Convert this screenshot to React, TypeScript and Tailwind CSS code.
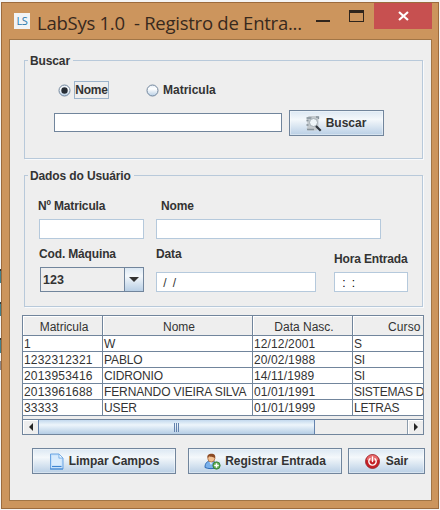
import type { ReactNode } from "react";

const raised =
  "flex items-center justify-center border border-[#71859c] bg-linear-to-b from-[#dce8f3] via-[#f4f8fb] via-35% to-[#b9cfe5] shadow-[inset_0_0_0_1px_#ffffff66]";
const field = "border border-[#b5c9dc] bg-white";

function Group({ title, className, children }: { title: string; className: string; children: ReactNode }) {
  return (
    <section className={`relative ml-[14px] w-[399px] border border-[#b8c9da] shadow-[1px_1px_0_#f8fafc] ${className}`}>
      <h2 className="absolute -top-[8px] left-[3px] bg-[#eeeeee] pl-[2px] pr-[3px] font-bold leading-[16px] tracking-[-0.12px]">{title}</h2>
      {children}
    </section>
  );
}

function Radio({ checked }: { checked?: boolean }) {
  return (
    <svg className="h-[13px] w-[13px] shrink-0" viewBox="0 0 13 13">
      <defs>
        <linearGradient id="radioFill" x1="0" y1="0" x2="0" y2="1">
          <stop offset="0" stopColor="#e4edf6" />
          <stop offset=".35" stopColor="#ffffff" />
          <stop offset="1" stopColor="#b6cee5" />
        </linearGradient>
      </defs>
      <circle cx="6.5" cy="6.5" r="5.5" fill="url(#radioFill)" stroke="#71859c" />
      {checked && <circle cx="6.5" cy="6.5" r="3.2" fill="#272d35" />}
    </svg>
  );
}

function SearchIcon() {
  return (
    <svg className="h-[17px] w-[17px]" viewBox="0 0 17 17">
      <path d="M2 2.500 4 1h8l1.500 1v11l-2 2.500H3L1.500 14l1-2-1-2 1-2-1-2z" fill="#c3c9cd" />
      <path d="M1.500 3h5M1.500 5.500h2M1.500 10h2M2 14.500h7M11 2h2.500v2" stroke="#87939b" strokeWidth="1.300" fill="none" />
      <circle cx="8.500" cy="7.500" r="4" fill="#eef5f8" stroke="#a3adb3" strokeWidth="1" />
      <path d="m11 11 4.700 4.700" stroke="#2f363c" strokeWidth="2.200" />
    </svg>
  );
}

function PageIcon() {
  return (
    <svg className="h-[17px] w-[15px]" viewBox="0 0 15 17">
      <path d="M1.500 1h8.500l4 4v11H1.500z" fill="#c5e0fa" stroke="#6aa4e3" />
      <path d="M3 2.500h6V6h3.500v6H3z" fill="#d8ebfd" />
      <path d="M10 1v4h4z" fill="#f5fbff" stroke="#70a8e2" strokeWidth=".8" />
      <path d="M3 13.500h9.500M1 16h13" stroke="#3f85d2" />
    </svg>
  );
}

function UserIcon() {
  return (
    <svg className="h-[17px] w-[17px]" viewBox="0 0 17 17">
      <path d="M1 14.500C1 10 3 8 7 8s6 2 6 6.500c-3 1.500-9 1.500-12 0z" fill="#79b0eb" stroke="#2f6cb5" />
      <path d="m5 8 2 4 2-4z" fill="#e9f5ff" />
      <circle cx="7.300" cy="5.500" r="3.500" fill="#f3c193" stroke="#9c5b2c" strokeWidth=".7" />
      <path d="M3.300 5C3 2 5 .7 7.500.7S11.900 2 11.200 5.500C10 3.500 7 4.500 5 3.300z" fill="#8b4a24" />
      <circle cx="12.500" cy="12.500" r="3.700" fill="#5ba94e" stroke="#2b7430" strokeWidth=".7" />
      <path d="M12.500 10.200v4.600M10.200 12.500h4.600" stroke="#fff" strokeWidth="1.500" />
    </svg>
  );
}

function PowerIcon() {
  return (
    <svg className="h-[15px] w-[15px]" viewBox="0 0 15 15">
      <circle cx="7.500" cy="7.500" r="7" fill="#c42026" stroke="#982027" strokeWidth=".8" />
      <path d="M1.500 6a6.100 6.100 0 0 1 12 0Q7.500 8 1.500 6z" fill="#e66b6d" />
      <path d="M5 4.700a3.700 3.700 0 1 0 5 0M7.500 3v4.500" fill="none" stroke="#fff" strokeWidth="1.400" strokeLinecap="round" />
    </svg>
  );
}

const rows = [
  ["1", "W", "12/12/2001", "S"],
  ["1232312321", "PABLO", "20/02/1988", "SI"],
  ["2013953416", "CIDRONIO", "14/11/1989", "SI"],
  ["2013961688", "FERNANDO VIEIRA SILVA", "01/01/1991", "SISTEMAS D"],
  ["33333", "USER", "01/01/1999", "LETRAS"],
];
const columns = "grid grid-cols-[80px_150px_100px_70px]";
const cellTracking = ["tracking-[0.2px]", "tracking-[-0.12px]", "tracking-[0.12px]", "tracking-[-0.25px]"];

function Records() {
  return (
    <div className="mt-[8px] ml-[12px] h-[120px] w-[402px] overflow-hidden border border-[#71859c]">
      <div className={`${columns} h-[20px] border-b border-[#71859c] text-center leading-[22px]`}>
        {["Matricula", "Nome", "Data Nasc."].map((h) => (
          <span key={h} className="h-[19px] border-r border-[#71859c] pl-[3px] shadow-[inset_1px_1px_0_#fff]">{h}</span>
        ))}
        <span className="h-[19px] pl-[35px] text-left tracking-[0.1px] shadow-[inset_1px_1px_0_#fff]">Curso</span>
      </div>
      {rows.map((row) => (
        <div key={row[0]} className={`${columns} h-[16px] border-b border-[#71859c] bg-white leading-[17px]`}>
          {row.map((cell, i) => (
            <span key={i} className={`h-[15px] whitespace-nowrap pl-px ${cellTracking[i]} ${i < 3 ? "border-r border-[#71859c]" : ""}`}>{cell}</span>
          ))}
        </div>
      ))}
      <div className="mt-[3px] flex h-[15px] border-t border-[#71859c]">
        <div className="flex w-[15px] items-center justify-center shadow-[inset_1px_1px_0_#fff]">
          <i className="border-y-[4px] border-r-[4px] border-y-transparent border-r-[#252525]" />
        </div>
        <div className="flex w-[277px] items-center justify-center gap-px border-x border-[#6382ad] bg-linear-to-b from-[#c3d9ee] via-[#edf5fb] via-35% to-[#b5cde5]">
          <i className="h-[9px] w-px bg-[#6382ad]" />
          <i className="h-[9px] w-px bg-[#6382ad]" />
          <i className="h-[9px] w-px bg-[#6382ad]" />
        </div>
        <div className="w-[92px]" />
        <div className="flex w-[16px] items-center justify-center border-l border-[#8c9cac] shadow-[inset_1px_1px_0_#fff]">
          <i className="border-y-[4px] border-l-[4px] border-y-transparent border-l-[#252525]" />
        </div>
      </div>
    </div>
  );
}

export default function App() {
  return (
    <div className="flex h-[510px] w-[440px] bg-[#f4f4f4] pt-[2px] font-['Liberation_Sans',Arial,sans-serif] text-[12px] text-[#333333]">
      <div className="flex w-px shrink-0 flex-col">
        <i className="mt-[267px] h-[14px] border-t-2 border-[#303a3e] bg-[#45808c]" />
        <i className="mt-[19px] h-[14px] border-t-2 border-[#303a3e] bg-[#45808c]" />
        <i className="mt-[22px] h-[15px] border-t-2 border-[#303a3e] bg-[#45808c]" />
        <i className="mt-[8px] h-[9px] bg-[#8b8587]" />
      </div>
      <main className="h-[507px] w-[438px] border border-[#9c6b3d] bg-[#cc955d]">
        <header className="flex h-[36px] text-[#38291d]">
          <div className="mt-[10px] ml-[12px] h-[16px] w-[16px] bg-[#f1f4f6] text-center font-['Open_Sans',sans-serif] text-[11px] leading-[16px] tracking-[-0.3px] text-[#2879ac]">LS</div>
          <h1 className="mt-[6px] ml-[7px] w-[266px] whitespace-pre font-['Open_Sans',sans-serif] text-[18.5px] leading-[28px] tracking-[-0.25px]">LabSys 1.0  - Registro de Entra...</h1>
          <i className="mt-[17px] ml-[13px] h-[2px] w-[14px] bg-[#30251c]" />
          <i className="mt-[7px] ml-[19px] h-[12px] w-[15px] border border-t-[3px] border-[#30251c]" />
          <div className="ml-[10px] flex h-[26px] w-[58px] items-center justify-center bg-[#c75050]">
            <svg className="h-[10px] w-[11px]" viewBox="0 0 11 10"><path d="m1 1 9 8M10 1 1 9" stroke="white" strokeWidth="2.200" /></svg>
          </div>
        </header>
        <div className="ml-[7px] h-[462px] w-[423px] border border-[#a17546] bg-[#eeeeee]">
          <Group title="Buscar" className="mt-[20px] h-[99px]">
            <div className="mt-[20px] flex h-[18px] items-center font-bold">
              <span className="ml-[33px]"><Radio checked /></span>
              <span className="ml-[3px] h-[18px] w-[35px] border border-[#9db4cb] text-center leading-[17px] tracking-[-0.2px]">Nome</span>
              <span className="ml-[37px]"><Radio /></span>
              <span className="ml-[4px]">Matricula</span>
            </div>
            <div className="mt-[11px] flex">
              <div className="mt-[3px] ml-[29px] h-[19px] w-[228px] border border-[#71859c] bg-white" />
              <button className={`${raised} ml-[7px] h-[26px] w-[95px] gap-[4px] pr-[2px] font-bold`}><SearchIcon /><span>Buscar</span></button>
            </div>
          </Group>
          <Group title="Dados do Usuário" className="mt-[16px] h-[132px]">
            <div className="flex pt-[22px] font-bold leading-[16px] tracking-[-0.15px]"><span className="ml-[13px] w-[123px]">Nº Matricula</span><span>Nome</span></div>
            <div className="mt-[5px] ml-[14px] flex gap-[12px]"><div className={`${field} h-[20px] w-[105px]`} /><div className={`${field} h-[20px] w-[225px]`} /></div>
            <div className="ml-[14px] flex h-[54px] items-start font-bold tracking-[-0.15px]">
              <div className="w-[117px]">
                <div className="mt-[7px] h-[21px] leading-[16px]">Cod. Máquina</div>
                <div className="ml-px flex h-[25px] w-[104px] border border-[#71859c]">
                  <span className="w-[83px] pl-[2px] text-[12.5px] leading-[24px] tracking-normal">123</span>
                  <span className="flex flex-1 items-center justify-center border-l border-[#71859c] bg-linear-to-b from-[#dce8f3] via-[#f4f8fb] via-35% to-[#b9cfe5]"><i className="border-x-[5px] border-t-[5px] border-x-transparent border-t-[#333]" /></span>
                </div>
              </div>
              <div className="mr-[18px] w-[160px]">
                <div className="mt-[7px] h-[26px] leading-[16px]">Data</div>
                <div className={`${field} h-[20px] whitespace-pre pl-[3px] font-normal leading-[20px]`}> /  /</div>
              </div>
              <div className="w-[74px]">
                <div className="mt-[12px] h-[21px] whitespace-nowrap leading-[16px]">Hora Entrada</div>
                <div className={`${field} h-[20px] whitespace-pre pl-[4px] font-normal leading-[20px] text-black`}> :  :</div>
              </div>
            </div>
          </Group>
          <Records />
          <div className="mt-[13px] ml-[22px] flex font-bold">
            <button className={`${raised} h-[26px] w-[144px] gap-[5px]`}><PageIcon /><span>Limpar Campos</span></button>
            <button className={`${raised} ml-[12px] h-[26px] w-[154px] gap-[4px]`}><UserIcon /><span>Registrar Entrada</span></button>
            <button className={`${raised} ml-[6px] h-[26px] w-[77px] gap-[6px]`}><PowerIcon /><span className="tracking-[-0.1px]">Sair</span></button>
          </div>
        </div>
      </main>
    </div>
  );
}
